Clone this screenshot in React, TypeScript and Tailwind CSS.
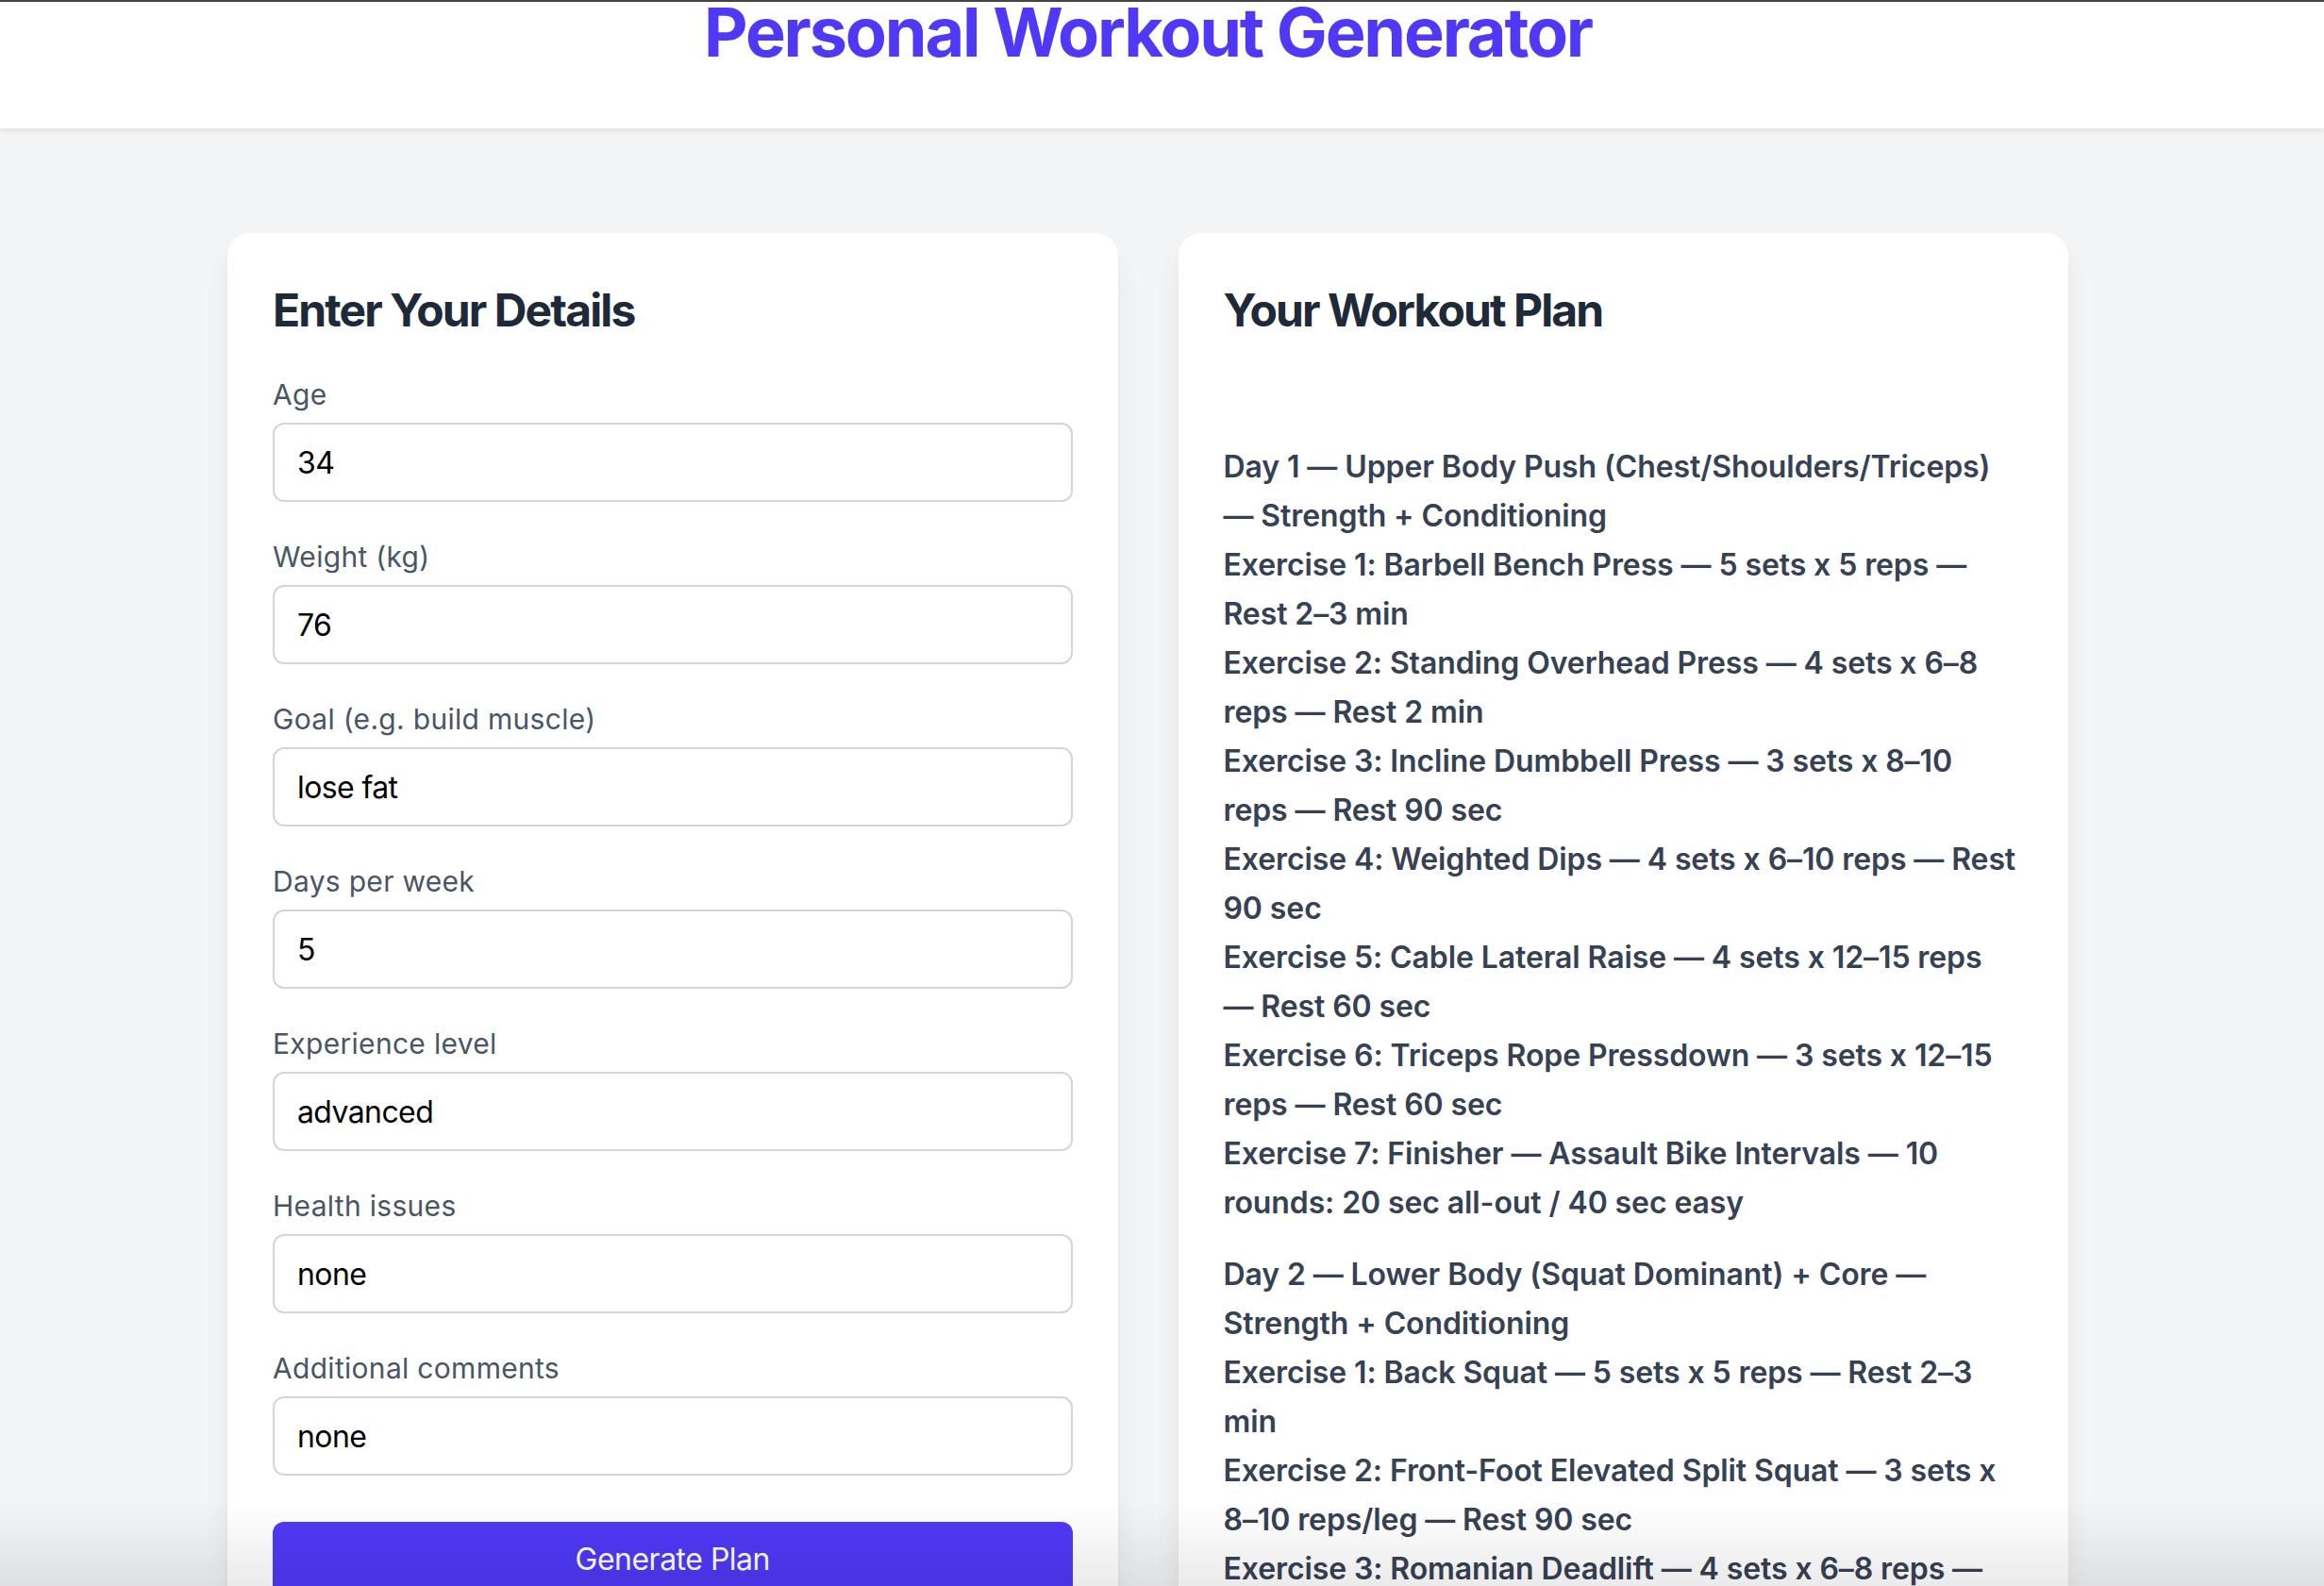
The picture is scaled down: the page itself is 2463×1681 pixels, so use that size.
import React from "react";

const fields = [
  { label: "Age", value: "34" },
  { label: "Weight (kg)", value: "76" },
  { label: "Goal (e.g. build muscle)", value: "lose fat" },
  { label: "Days per week", value: "5" },
  { label: "Experience level", value: "advanced" },
  { label: "Health issues", value: "none" },
  { label: "Additional comments", value: "none" },
];

const days: string[][][] = [
  [
    ["Day 1 — Upper Body Push (Chest/Shoulders/Triceps)", "— Strength + Conditioning"],
    ["Exercise 1: Barbell Bench Press — 5 sets x 5 reps —", "Rest 2–3 min"],
    ["Exercise 2: Standing Overhead Press — 4 sets x 6–8", "reps — Rest 2 min"],
    ["Exercise 3: Incline Dumbbell Press — 3 sets x 8–10", "reps — Rest 90 sec"],
    ["Exercise 4: Weighted Dips — 4 sets x 6–10 reps — Rest", "90 sec"],
    ["Exercise 5: Cable Lateral Raise — 4 sets x 12–15 reps", "— Rest 60 sec"],
    ["Exercise 6: Triceps Rope Pressdown — 3 sets x 12–15", "reps — Rest 60 sec"],
    ["Exercise 7: Finisher — Assault Bike Intervals — 10", "rounds: 20 sec all-out / 40 sec easy"],
  ],
  [
    ["Day 2 — Lower Body (Squat Dominant) + Core —", "Strength + Conditioning"],
    ["Exercise 1: Back Squat — 5 sets x 5 reps — Rest 2–3", "min"],
    ["Exercise 2: Front-Foot Elevated Split Squat — 3 sets x", "8–10 reps/leg — Rest 90 sec"],
    ["Exercise 3: Romanian Deadlift — 4 sets x 6–8 reps —", "Rest 2 min"],
    ["Exercise 4: Walking Lunges — 3 sets x 12 steps/leg —", "Rest 90 sec"],
    ["Exercise 5: Hanging Leg Raise — 3 sets x 12–15 reps", "— Rest 60 sec"],
  ],
];

const cardShadow =
  "shadow-[0_20px_30px_-6px_rgba(0,0,0,0.10),0_8px_12px_-8px_rgba(0,0,0,0.10)]";

export default function App() {
  return (
    <div
      className="min-h-screen bg-gray-100"
      style={{ fontFamily: "Inter, 'Noto Sans', sans-serif" }}
    >
      <div className="h-[2px] bg-[#454545]" />
      <header className="relative z-10 h-[134px] bg-white shadow-[0_3px_6px_rgba(0,0,0,0.08)]">
        <div className="pr-[30px] flex justify-center">
          <h1 className="-mt-[4px] text-[72px] leading-none font-bold tracking-[-2.2px] text-indigo-600">
            Personal Workout Generator
          </h1>
        </div>
      </header>

      <main className="pr-[30px] pt-[111px] pb-[100px]">
        <div className="mx-auto max-w-[1951px] grid grid-cols-2 gap-[64px] items-start">
          <section className={`rounded-[24px] bg-white px-[48px] pt-[50px] pb-[48px] ${cardShadow}`}>
            <h2 className="mb-[37px] text-[48px] leading-[64px] font-bold tracking-[-1.9px] text-gray-800">
              Enter Your Details
            </h2>
            <div className="flex flex-col gap-[38px]">
              {fields.map((f) => (
                <div key={f.label}>
                  <label className="mb-[10px] block text-[30px] leading-[40px] tracking-[0.3px] text-gray-600">
                    {f.label}
                  </label>
                  <input
                    readOnly
                    value={f.value}
                    className="block h-[84px] w-full rounded-[12px] border-2 border-gray-300 bg-white px-[24px] text-[32px] tracking-[-0.6px] text-black outline-none"
                    style={{ fontFamily: "Inter, 'Noto Sans', sans-serif" }}
                  />
                </div>
              ))}
            </div>
            <button
              className="mt-[49px] block h-[80px] w-full rounded-[12px] bg-indigo-600 text-[32px] leading-[48px] tracking-[-0.5px] text-white"
              style={{ fontFamily: "Inter, 'Noto Sans', sans-serif" }}
            >
              Generate Plan
            </button>
          </section>

          <section className={`rounded-[24px] bg-white px-[48px] pt-[50px] pb-[48px] ${cardShadow}`}>
            <h2 className="mb-[108px] text-[48px] leading-[64px] font-bold tracking-[-1.9px] text-gray-800">
              Your Workout Plan
            </h2>
            <div className="flex flex-col gap-[24px]">
              {days.map((d, i) => (
                <div
                  key={i}
                  className="whitespace-nowrap text-[32px] leading-[52px] font-semibold tracking-[-0.1px] text-gray-700"
                >
                  {d.map((pair) => (
                    <p key={pair[0]}>
                      {pair[0]}
                      <br />
                      {pair[1]}
                    </p>
                  ))}
                </div>
              ))}
            </div>
          </section>
        </div>
      </main>

      <div className="pointer-events-none fixed inset-x-0 bottom-0 z-20 h-[90px] bg-linear-to-b from-transparent to-black/[0.08]" />
    </div>
  );
}
